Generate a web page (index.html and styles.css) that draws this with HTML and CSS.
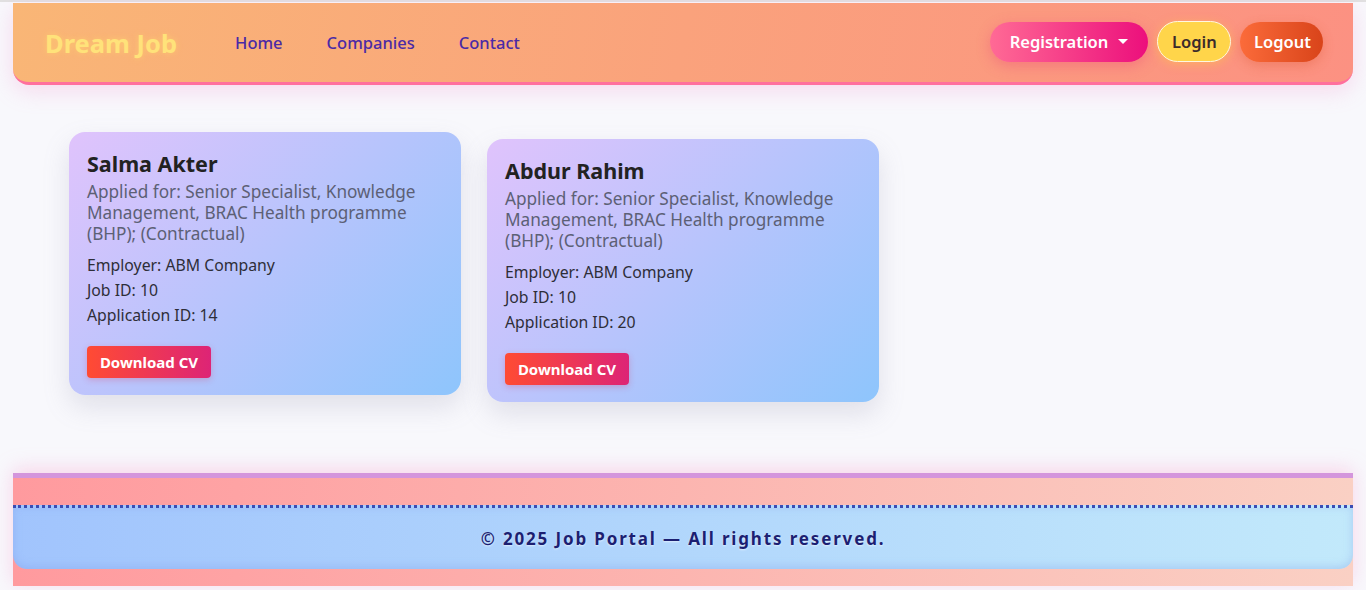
FILE: index.html
```html
<!DOCTYPE html>
<html lang="en">
<head>
<meta charset="utf-8">
<title>Dream Job</title>
<link rel="stylesheet" href="styles.css">
</head>
<body>
<div class="page">
  <nav class="navbar">
    <div class="nav-left">
      <a class="brand" href="#">Dream Job</a>
      <ul class="nav-links">
        <li><a href="#">Home</a></li>
        <li><a href="#">Companies</a></li>
        <li><a href="#">Contact</a></li>
      </ul>
    </div>
    <div class="nav-right">
      <button class="pill pill-reg">Registration <span class="caret"></span></button>
      <button class="pill pill-login">Login</button>
      <button class="pill pill-logout">Logout</button>
    </div>
  </nav>

  <main class="main">
    <div class="cards">
      <div class="card lifted">
        <h3 class="card-name">Salma Akter</h3>
        <p class="card-job">Applied for: Senior Specialist, Knowledge Management, BRAC Health programme (BHP); (Contractual)</p>
        <p class="card-meta">Employer: ABM Company</p>
        <p class="card-meta">Job ID: 10</p>
        <p class="card-meta">Application ID: 14</p>
        <a class="btn-cv" href="#">Download CV</a>
      </div>
      <div class="card">
        <h3 class="card-name">Abdur Rahim</h3>
        <p class="card-job">Applied for: Senior Specialist, Knowledge Management, BRAC Health programme (BHP); (Contractual)</p>
        <p class="card-meta">Employer: ABM Company</p>
        <p class="card-meta">Job ID: 10</p>
        <p class="card-meta">Application ID: 20</p>
        <a class="btn-cv" href="#">Download CV</a>
      </div>
    </div>
  </main>

  <footer class="footer">
    <div class="footer-inner">
      <p>© 2025 Job Portal — All rights reserved.</p>
    </div>
  </footer>
</div>
</body>
</html>
```

FILE: styles.css
```css
* { box-sizing: border-box; }

html, body {
  margin: 0;
  padding: 0;
  background: #f8f8fc;
  font-family: "Noto Sans", "Open Sans", sans-serif;
}

.page {
  border-top: 2px solid #e1e1e1;
  padding: 1px 13px 4px 13px;
  min-height: 590px;
}

/* NAVBAR */
.navbar {
  height: 82px;
  display: flex;
  align-items: center;
  justify-content: space-between;
  padding: 0 30px 0 32px;
  background: linear-gradient(100deg, #f9b676 0%, #faa27c 50%, #fc9182 100%);
  border-bottom: 3px solid #ff6f9d;
  border-radius: 0 0 16px 16px;
  box-shadow: 0 6px 22px rgba(245, 140, 200, 0.28);
}

.nav-left {
  display: flex;
  align-items: center;
}

.brand {
  font-size: 25.5px;
  font-weight: 700;
  color: #ffe27a;
  text-decoration: none;
  text-shadow: 0 0 6px rgba(255, 205, 110, 0.85);
  margin-right: 40px;
}

.nav-links {
  list-style: none;
  display: flex;
  margin: 0;
  padding: 0;
}

.nav-links a {
  display: block;
  padding: 8px 26px 8px 18px;
  font-size: 16.5px;
  font-weight: 500;
  color: #4b2aa6;
  text-decoration: none;
}

.nav-right {
  display: flex;
  align-items: center;
  gap: 9px;
  padding-bottom: 2px;
}

.pill {
  height: 40px;
  border: none;
  border-radius: 22px;
  font-family: inherit;
  font-size: 16.5px;
  font-weight: 600;
  padding: 0 14px;
  cursor: pointer;
}

.pill-reg {
  width: 158px;
  color: #fff;
  background: linear-gradient(90deg, #ff6a95, #ec0f7c);
  box-shadow: 0 4px 14px rgba(236, 60, 120, 0.35);
  display: flex;
  align-items: center;
  justify-content: center;
  gap: 10px;
}

.caret {
  width: 0;
  height: 0;
  border-left: 5px solid transparent;
  border-right: 5px solid transparent;
  border-top: 5px solid #fff;
}

.pill-login {
  width: 74px;
  height: 41px;
  color: #3b2b2b;
  background: #ffd54a;
  border: 1.5px solid #fff7e0;
  box-shadow: 0 2px 10px rgba(255, 200, 70, 0.5);
}

.pill-logout {
  width: 83px;
  color: #fff;
  background: linear-gradient(90deg, #fb6b3a, #d9441a);
  box-shadow: 0 4px 12px rgba(220, 80, 40, 0.3);
}

/* MAIN */
.main {
  padding: 54px 0 71px 56px;
}

.cards {
  display: flex;
  align-items: flex-start;
  gap: 26px;
}

.card {
  width: 392px;
  height: 263px;
  padding: 18px 18px;
  border-radius: 16px;
  background: linear-gradient(135deg, #e0c3fc 0%, #8ec5fc 100%);
  box-shadow: 0 12px 26px rgba(140, 140, 170, 0.22);
}

.lifted {
  transform: translateY(-7px);
}

.card-name {
  margin: 0 0 3px 0;
  font-size: 21.5px;
  font-weight: 700;
  color: #222;
  line-height: 28px;
}

.card-job {
  margin: 0 0 9px 0;
  font-size: 17.2px;
  line-height: 21px;
  color: #5c6075;
}

.card-meta {
  margin: 0;
  font-size: 15.8px;
  line-height: 25px;
  color: #2e2e38;
}

.btn-cv {
  display: inline-block;
  margin-top: 18px;
  width: 124px;
  height: 32px;
  line-height: 32px;
  text-align: center;
  border-radius: 4px;
  background: linear-gradient(90deg, #ff4b33, #dd2476);
  color: #fff;
  font-size: 15px;
  font-weight: 700;
  text-decoration: none;
  box-shadow: 0 2px 6px rgba(220, 40, 80, 0.25);
}

/* FOOTER */
.footer {
  border-top: 5px solid #d495dc;
  padding: 27px 0 17px 0;
  background: linear-gradient(90deg, #ff9a9e 0%, #fcb5b0 50%, #fad0c4 100%);
  box-shadow: 0 -4px 18px rgba(250, 150, 200, 0.35);
}

.footer-inner {
  border-top: 3px dotted #3b4cb3;
  border-radius: 0 0 14px 14px;
  background: linear-gradient(90deg, #a1c4fd 0%, #c2e9fb 100%);
  box-shadow: inset 0 -2px 8px rgba(120, 150, 230, 0.35);
  height: 64px;
  display: flex;
  align-items: center;
  justify-content: center;
}

.footer-inner p {
  margin: 0;
  font-size: 17px;
  font-weight: 700;
  letter-spacing: 1.85px;
  color: #1c1f72;
  text-shadow: 0 1px 2px rgba(255, 255, 255, 0.6);
}
```
